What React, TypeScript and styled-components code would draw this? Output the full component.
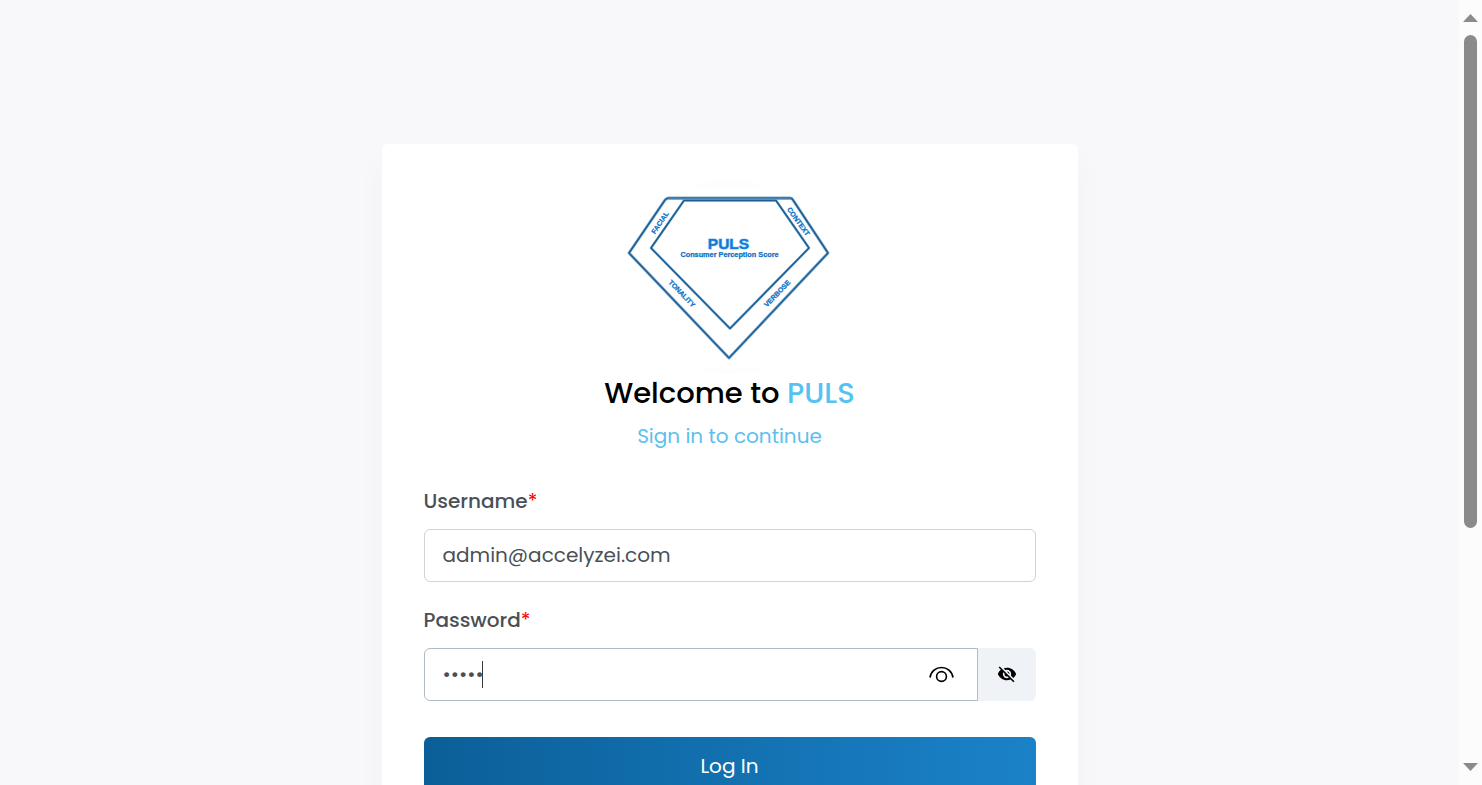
import React, { useState } from 'react';
import styled, { createGlobalStyle } from 'styled-components';

const GlobalStyle = createGlobalStyle`
  *, *::before, *::after { box-sizing: border-box; }
  body {
    margin: 0;
    background: #f8f8fb;
    color: #495057;
    font-family: Poppins, Inter, "Liberation Sans", sans-serif;
    font-size: 20px;
    line-height: 30px;
  }
`;

const Window = styled.div`
  display: flex;
  height: 100vh;
  overflow: hidden;
`;

const Page = styled.main`
  flex: 1;
  min-width: 0;
  overflow: hidden;
  padding: 144px 24px;
`;

const Card = styled.section`
  max-width: 696px;
  margin: 0 auto;
  padding: 36px 42px 48px;
  background: #fff;
  border-radius: 6px;
  box-shadow: 0 16px 32px rgba(18, 38, 63, 0.03);
`;

const Intro = styled.header`
  display: flex;
  flex-direction: column;
  align-items: center;
  text-align: center;
`;

const Title = styled.h1`
  margin: 0;
  color: #000;
  font-size: 29px;
  font-weight: 500;
  line-height: 36px;
`;

const Brand = styled.span`
  color: #55c3f0;
`;

const Subtitle = styled.p`
  margin: 10px 0 0;
  color: #5bc0ee;
`;

const Form = styled.form`
  display: flex;
  flex-direction: column;
  gap: 23px;
  margin-top: 35px;
`;

const Field = styled.div`
  display: flex;
  flex-direction: column;
  gap: 13px;
`;

const Label = styled.label`
  font-weight: 500;
`;

const Required = styled.span`
  color: #f00;
  font-weight: 400;
`;

const Input = styled.input<{ $grouped?: boolean }>`
  width: 100%;
  height: 53px;
  padding: 0 18px 2px;
  border: 1px solid ${(p) => (p.$grouped ? '#b1bbc4' : '#ced4da')};
  border-radius: ${(p) => (p.$grouped ? '6px 0 0 6px' : '6px')};
  background: #fff;
  color: #495057;
  font: inherit;
  caret-color: transparent;
  outline: none;
`;

const InputGroup = styled.div`
  display: flex;
`;

const PasswordBox = styled.div`
  position: relative;
  flex: 1;
`;

const Caret = styled.span`
  position: absolute;
  left: 58px;
  top: 13px;
  width: 1px;
  height: 27px;
  background: #343a40;
`;

const RevealButton = styled.button`
  position: absolute;
  right: 20px;
  top: 10px;
  display: flex;
  padding: 0;
  border: 0;
  background: none;
  color: #000;
`;

const ToggleButton = styled.button`
  display: flex;
  align-items: center;
  justify-content: center;
  width: 58px;
  padding: 0 0 2px;
  border: 0;
  border-radius: 0 6px 6px 0;
  background: #eff2f7;
  color: #000;
`;

const SubmitButton = styled.button`
  height: 57px;
  margin-top: 13px;
  border: 0;
  border-radius: 6px;
  background: linear-gradient(to right, #0b5f98, #1b82c8);
  color: #fff;
  font: inherit;
`;

const Scrollbar = styled.div`
  display: flex;
  flex-direction: column;
  align-items: center;
  width: 23px;
  padding: 14px 0;
  background: #fcfcfc;
`;

const Track = styled.div`
  flex: 1;
  width: 13px;
  margin: 13px 0;
`;

const Thumb = styled.div`
  height: 69%;
  border-radius: 7px;
  background: #8b8b8b;
`;

const Arrow = ({ down = false }: { down?: boolean }) => (
  <svg width="15" height="8" viewBox="0 0 15 8" aria-hidden="true">
    <path d={down ? 'M0 0h15L7.500 8z' : 'M0 8h15L7.500 0z'} fill="#8b8b8b" />
  </svg>
);

const OUTER = 'M669 198H790Q792 198 793 200L828 253L729 358L629 253L665 200Q667 198 669 198Z';
const INNER = 'M684 200.5H776L809 248L730 328.5L651 248Z';

const Logo = () => (
  <svg width="208" height="195" viewBox="626 180 208 195" role="img" aria-label="PULS Consumer Perception Score">
    <circle cx="730" cy="277" r="97" fill="#fdfdfd" />
    <rect x="626" y="187" width="208" height="180" fill="#fff" />
    <g fill="none" strokeLinejoin="round">
      <path d={OUTER} stroke="#86aecd" strokeWidth="3" />
      <path d={OUTER} stroke="#1c5f96" strokeWidth="1.500" />
      <path d={INNER} stroke="#86aecd" strokeWidth="2.500" />
      <path d={INNER} stroke="#1c5f96" strokeWidth="1.500" />
      <path d="M669 198.500H791" stroke="#4580b0" strokeWidth="2" />
    </g>
    <g fill="#0b70c4" stroke="#0b70c4" strokeWidth="0.250" fontFamily="Liberation Sans, sans-serif" fontWeight="700" textAnchor="middle">
      <text x="728.500" y="248.500" fontSize="15.500" fill="#1478d4" stroke="#8ccbfa" strokeWidth="1.200" paintOrder="stroke">PULS</text>
      <text x="729.500" y="257" fontSize="7.300">Consumer Perception Score</text>
      <text transform="translate(660 222.500) rotate(-56)" y="2.500" fontSize="7">FACIAL</text>
      <text transform="translate(798.500 221.500) rotate(54)" y="2.500" fontSize="7">CONTEXT</text>
      <text transform="translate(682 293.500) rotate(46)" y="2.500" fontSize="7">TONALITY</text>
      <text transform="translate(777 293.500) rotate(-46)" y="2.500" fontSize="7">VERBOSE</text>
    </g>
  </svg>
);

const EyeIcon = () => (
  <svg width="32" height="32" viewBox="0 0 32 32" fill="none" stroke="currentColor" aria-hidden="true">
    <path d="M4 19.500C5 13 10 9.500 15.500 9.500S26 13 27 19.500" strokeWidth="1.700" />
    <circle cx="15.500" cy="18.500" r="4.900" strokeWidth="1.600" />
  </svg>
);

const EyeOffIcon = () => (
  <svg width="20" height="20" viewBox="0 0 24 24" fill="currentColor" aria-hidden="true">
    <path d="M11.83,9L15,12.16C15,12.11 15,12.05 15,12A3,3 0 0,0 12,9C11.94,9 11.89,9 11.83,9M7.53,9.8L9.08,11.35C9.03,11.56 9,11.77 9,12A3,3 0 0,0 12,15C12.22,15 12.44,14.97 12.65,14.92L14.2,16.47C13.53,16.8 12.79,17 12,17A5,5 0 0,1 7,12C7,11.21 7.2,10.47 7.53,9.8M2,4.27L4.28,6.55L4.73,7C3.08,8.3 1.78,10 1,12C2.73,16.39 7,19.5 12,19.5C13.55,19.5 15.03,19.2 16.38,18.66L16.81,19.08L19.73,22L21,20.73L3.27,3M12,7A5,5 0 0,1 17,12C17,12.64 16.87,13.26 16.64,13.82L19.57,16.75C21.07,15.5 22.27,13.86 23,12C21.27,7.61 17,4.5 12,4.5C10.6,4.5 9.26,4.75 8,5.2L10.17,7.35C10.74,7.13 11.35,7 12,7Z" />
  </svg>
);

export default function App() {
  const [username, setUsername] = useState('admin@accelyzei.com');
  const [password, setPassword] = useState('admin');
  const [visible, setVisible] = useState(false);
  const toggle = () => setVisible(!visible);

  return (
    <Window>
      <GlobalStyle />
      <Page>
        <Card>
          <Intro>
            <Logo />
            <Title>Welcome to <Brand>PULS</Brand></Title>
            <Subtitle>Sign in to continue</Subtitle>
          </Intro>
          <Form onSubmit={(e) => e.preventDefault()}>
            <Field>
              <Label htmlFor="username">Username<Required>*</Required></Label>
              <Input id="username" value={username} onChange={(e) => setUsername(e.target.value)} />
            </Field>
            <Field>
              <Label htmlFor="password">Password<Required>*</Required></Label>
              <InputGroup>
                <PasswordBox>
                  <Input
                    $grouped
                    id="password"
                    type={visible ? 'text' : 'password'}
                    value={password}
                    onChange={(e) => setPassword(e.target.value)}
                  />
                  <Caret />
                  <RevealButton type="button" aria-label="Reveal password" onClick={toggle}><EyeIcon /></RevealButton>
                </PasswordBox>
                <ToggleButton type="button" aria-label="Toggle password visibility" onClick={toggle}><EyeOffIcon /></ToggleButton>
              </InputGroup>
            </Field>
            <SubmitButton type="submit">Log In</SubmitButton>
          </Form>
        </Card>
      </Page>
      <Scrollbar aria-hidden="true">
        <Arrow />
        <Track><Thumb /></Track>
        <Arrow down />
      </Scrollbar>
    </Window>
  );
}
